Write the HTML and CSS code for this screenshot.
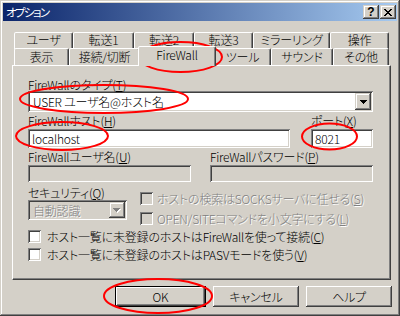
FILE: index.html
```html
<!DOCTYPE html>
<html lang="ja">
<head>
<meta charset="utf-8">
<title>オプション</title>
<link rel="stylesheet" href="styles.css">
</head>
<body>
<div class="window">
  <div class="titlebar">
    <span class="title">オプション</span>
    <div class="capbtns">
      <span class="capbtn help">?</span>
      <span class="capbtn close"><svg width="8" height="7" viewBox="0 0 8 7" shape-rendering="crispEdges"><path d="M0 0h2v1h1v1h2v-1h1v-1h2v1h-1v1h-1v1h-1v1h1v1h1v1h1v1h-2v-1h-1v-1h-2v1h-1v1h-2v-1h1v-1h1v-1h1v-1h-1v-1h-1v-1h-1z" fill="#000"/></svg></span>
    </div>
  </div>
  <div class="client">
    <div class="tabs">
      <div class="tabrow back">
        <div class="tab t1">ユーザ</div>
        <div class="tab t2">転送1</div>
        <div class="tab t3">転送2</div>
        <div class="tab t4">転送3</div>
        <div class="tab t5">ミラーリング</div>
        <div class="tab t6">操作</div>
      </div>
      <div class="tabrow front">
        <div class="tab f1">表示</div>
        <div class="tab f2">接続/切断</div>
        <div class="tab f3 sel">FireWall</div>
        <div class="tab f4">ツール</div>
        <div class="tab f5">サウンド</div>
        <div class="tab f6">その他</div>
      </div>
    </div>
    <div class="panel">
      <div class="lbl">FireWallのタイプ(<u>T</u>)</div>
      <div class="combo wide">
        <span class="ctext">USER ユーザ名@ホスト名</span>
        <span class="dd"><svg width="7" height="4" viewBox="0 0 7 4" shape-rendering="crispEdges"><path d="M0 0h7v1h-1v1h-1v1h-1v1h-1v-1h-1v-1h-1v-1h-1z" fill="#000"/></svg></span>
      </div>
      <div class="pair">
        <div class="field host">
          <div class="lbl">FireWallホスト(<u>H</u>)</div>
          <div class="edit">localhost</div>
        </div>
        <div class="field port">
          <div class="lbl">ポート(<u>X</u>)</div>
          <div class="edit">8021</div>
        </div>
      </div>
      <div class="pair">
        <div class="field half">
          <div class="lbl">FireWallユーザ名(<u>U</u>)</div>
          <div class="edit off"></div>
        </div>
        <div class="field half">
          <div class="lbl">FireWallパスワード(<u>P</u>)</div>
          <div class="edit off"></div>
        </div>
      </div>
      <div class="sec">
        <div class="seccol">
          <div class="lbl">セキュリティ(<u>Q</u>)</div>
          <div class="combo small off">
            <span class="ctext">自動認識</span>
            <span class="dd"><svg width="8" height="5" viewBox="0 0 8 5" shape-rendering="crispEdges"><path d="M1 1h7v1h-1v1h-1v1h-1v1h-1v-1h-1v-1h-1v-1h-1z" fill="#fff"/><path d="M0 0h7v1h-1v1h-1v1h-1v1h-1v-1h-1v-1h-1v-1h-1z" fill="#808080"/></svg></span>
          </div>
        </div>
        <div class="chkcol">
          <div class="chkrow off"><span class="box"></span><span class="ctxt">ホストの検索はSOCKSサーバに任せる(<u>S</u>)</span></div>
          <div class="chkrow off"><span class="box"></span><span class="ctxt">OPEN/SITEコマンドを小文字にする(<u>L</u>)</span></div>
        </div>
      </div>
      <div class="chkrow big"><span class="box"></span><span class="ctxt">ホスト一覧に未登録のホストはFireWallを使って接続(<u>C</u>)</span></div>
      <div class="chkrow big"><span class="box"></span><span class="ctxt">ホスト一覧に未登録のホストはPASVモードを使う(<u>V</u>)</span></div>
    </div>
    <div class="buttons">
      <div class="btn default"><span>OK</span></div>
      <div class="btn"><span>キャンセル</span></div>
      <div class="btn"><span>ヘルプ</span></div>
    </div>
  </div>
  <svg class="annot" width="400" height="316" viewBox="0 0 400 316">
    <g fill="none" stroke="#ff0000" stroke-width="2">
      <ellipse cx="180.5" cy="57" rx="41.5" ry="15"/>
      <ellipse cx="104" cy="99" rx="84" ry="14"/>
      <ellipse cx="62" cy="136" rx="46" ry="14"/>
      <ellipse cx="329.5" cy="136.5" rx="27.5" ry="13"/>
      <ellipse cx="158" cy="296" rx="54" ry="17"/>
    </g>
  </svg>
</div>
</body>
</html>
```
FILE: styles.css
```css
* { box-sizing: border-box; }
html, body { margin: 0; padding: 0; }
body {
  background: #d4d0c8;
  font-family: "Noto Sans CJK JP", "Noto Sans", sans-serif;
  font-size: 12px;
  font-weight: 300;
  font-feature-settings: "palt";
  letter-spacing: -0.2px;
  color: #000;
}
u { text-decoration: underline; text-underline-offset: 1px; }

.window {
  position: relative;
  width: 400px;
  height: 316px;
  padding: 3px;
  background: #d4d0c8;
  overflow: hidden;
  box-shadow: inset -1px -1px 0 #404040, inset 1px 1px 0 #d4d0c8,
              inset -2px -2px 0 #808080, inset 2px 2px 0 #fff;
}

.titlebar {
  height: 18px;
  display: flex;
  align-items: center;
  justify-content: space-between;
  padding: 0 1px 0 3px;
  background: linear-gradient(to right, #0a246a, #a6caf0);
  color: #fff;
}
.title { font-size: 11.5px; line-height: 18px; letter-spacing: -1.6px; font-weight: 400; }
.capbtns { display: flex; gap: 1px; }
.capbtn {
  width: 16px; height: 14px;
  display: flex; align-items: center; justify-content: center;
  background: #d4d0c8;
  color: #000;
  box-shadow: inset -1px -1px 0 #404040, inset 1px 1px 0 #d4d0c8,
              inset -2px -2px 0 #808080, inset 2px 2px 0 #fff;
}
.capbtn.help { font-family: "Liberation Sans", sans-serif; font-weight: bold; font-size: 12px; line-height: 14px; letter-spacing: 0; }

.client { padding: 0 6px 0 9px; }

.tabs { margin-top: 11px; padding-left: 2px; }
.tabrow { display: flex; }
.tabrow.back { height: 16px; }
.tabrow.front { height: 17px; }
.tab {
  flex: none;
  text-align: center;
  border-style: solid;
  border-width: 1px 1px 0 1px;
  border-color: #fff #404040 transparent #fff;
  border-radius: 2px 2px 0 0;
  box-shadow: inset -1px 0 0 #808080;
  background: #d4d0c8;
  line-height: 14px;
  white-space: nowrap;
}
.back .tab { height: 17px; }
.front .tab { height: 17px; line-height: 15px; }
.t1 { width: 59px; } .t2 { width: 61px; } .t3 { width: 60px; }
.t4 { width: 59px; } .t5 { width: 77px; } .t6 { width: 59px; }
.f1 { width: 55px; } .f2 { width: 71px; } .f3 { width: 74px; }
.f4 { width: 57px; } .f5 { width: 62px; } .f6 { width: 56px; }
.tab.sel {
  position: relative;
  z-index: 1;
  width: 78px;
  height: 20px;
  margin: -2px -2px 0 -2px;
  line-height: 16px;
}

.panel {
  height: 215px;
  border-style: solid;
  border-width: 1px;
  border-color: #fff #404040 #404040 #fff;
  box-shadow: inset -1px -1px 0 #808080;
  padding: 12px 17px 0 15px;
}
.lbl { height: 13px; line-height: 13px; white-space: nowrap; }

.combo, .edit, .box {
  background: #fff;
  box-shadow: inset 1px 1px 0 #808080, inset -1px -1px 0 #fff,
              inset 2px 2px 0 #404040, inset -2px -2px 0 #d4d0c8;
}
.combo {
  height: 21px;
  display: flex;
  align-items: center;
  padding: 2px;
}
.combo.wide { width: 345px; }
.ctext { flex: 1; padding-left: 3px; line-height: 17px; white-space: nowrap; }
.dd {
  width: 16px; height: 17px;
  display: flex; align-items: center; justify-content: center;
  background: #d4d0c8;
  box-shadow: inset -1px -1px 0 #404040, inset 1px 1px 0 #d4d0c8,
              inset -2px -2px 0 #808080, inset 2px 2px 0 #fff;
}

.pair { display: flex; justify-content: space-between; margin-top: 2px; }
.field .lbl { margin-bottom: 2px; }
.host { width: 262px; }
.port { width: 62px; }
.half { width: 163px; }
.edit {
  height: 19px;
  padding: 0 4px;
  line-height: 19px;
  white-space: nowrap;
}
.edit.off, .combo.off, .chkrow.off .box { background: #d4d0c8; }
.pair + .pair .edit { height: 17px; }

.sec { display: flex; margin-top: 4px; }
.seccol { width: 112px; }
.seccol .lbl { margin-bottom: 1px; }
.combo.small { width: 99px; height: 20px; }
.combo.off .ctext { color: #808080; text-shadow: 1px 1px 0 #fff; }
.combo.small .dd { height: 16px; }
.chkcol { padding-top: 6px; display: flex; flex-direction: column; gap: 7px; }

.chkrow { display: flex; align-items: center; height: 13px; white-space: nowrap; }
.box { width: 13px; height: 13px; flex: none; }
.ctxt { margin-left: 4px; line-height: 13px; }
.chkrow.off .ctxt { color: #808080; text-shadow: 1px 1px 0 #fff; }
.chkrow.big { margin-top: 5px; }
.chkrow.big .ctxt { margin-left: 6px; }

.buttons {
  display: flex;
  justify-content: flex-end;
  gap: 7px;
  margin-top: 6px;
  margin-right: -1px;
}
.btn {
  width: 86px; height: 21px;
  display: flex; align-items: center; justify-content: center;
  box-shadow: inset -1px -1px 0 #404040, inset 1px 1px 0 #fff,
              inset -2px -2px 0 #808080, inset 2px 2px 0 #d4d0c8;
}
.btn.default {
  width: 91px;
  box-shadow: inset 0 0 0 1px #000, inset -2px -2px 0 #404040, inset 2px 2px 0 #fff,
              inset -3px -3px 0 #808080;
}

.annot { position: absolute; left: 0; top: 0; pointer-events: none; }
```
